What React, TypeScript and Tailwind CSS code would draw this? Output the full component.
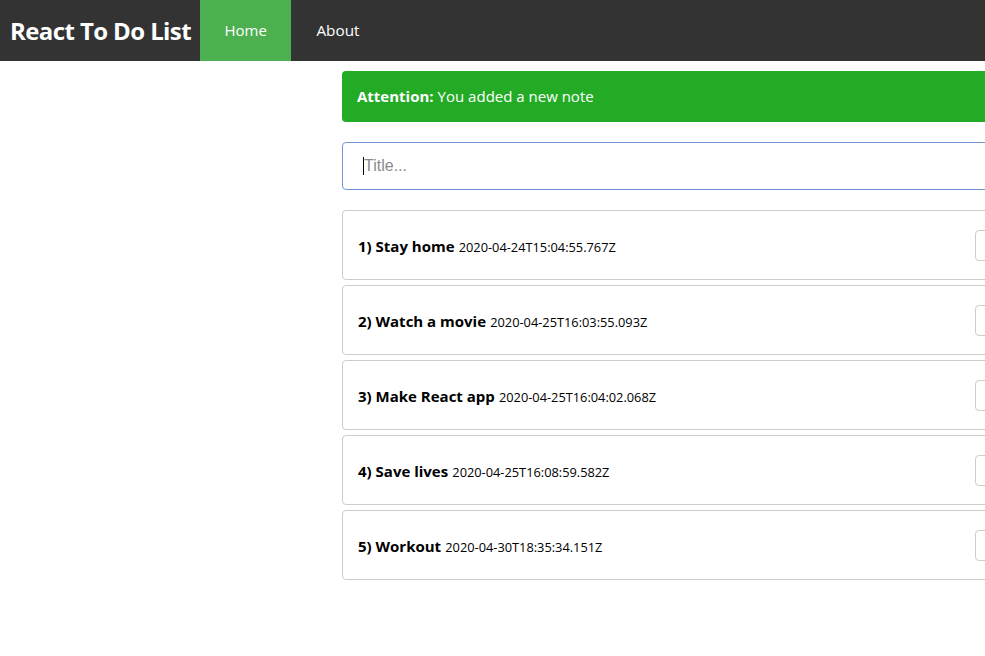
import React from 'react';

const notes = [
  { title: 'Stay home', date: '2020-04-24T15:04:55.767Z' },
  { title: 'Watch a movie', date: '2020-04-25T16:03:55.093Z' },
  { title: 'Make React app', date: '2020-04-25T16:04:02.068Z' },
  { title: 'Save lives', date: '2020-04-25T16:08:59.582Z' },
  { title: 'Workout', date: '2020-04-30T18:35:34.151Z' },
];

export default function App() {
  return (
    <div className="min-h-screen w-full overflow-hidden bg-white font-['Open_Sans',sans-serif] text-black">
      {/* Navbar */}
      <nav className="flex h-[61px] items-stretch bg-[#333333]">
        <div className="flex items-center pl-[10px] pr-[9px] text-[24px] font-bold tracking-[-0.6px] text-white">
          React To Do List
        </div>
        <a className="flex items-center bg-[#4caf50] px-[24.5px] text-[15px] text-white">Home</a>
        <a className="flex items-center px-[25px] text-[15.3px] text-white">About</a>
      </nav>

      <div className="ml-[342px] w-[700px] pt-[10px]">
        <div className="flex h-[51px] items-center rounded bg-[#23ab26] px-[15px] text-[15px] text-white">
          <strong className="mr-1">Attention:</strong> You added a new note
        </div>

        <div className="mt-5 flex h-[48px] items-center rounded border border-[#7297d9] px-5">
          <span className="h-[18px] w-px bg-black" />
          <span className="font-['Liberation_Sans',sans-serif] text-[16px] text-[#8a8a8a]">Title...</span>
        </div>

        <div className="mt-5 flex flex-col gap-[5px]">
          {notes.map((n, i) => (
            <div
              key={i}
              className="flex h-[70px] items-center justify-between rounded border border-[#cccccc] pl-[15px] pr-[9px]"
            >
              <div className="pt-[1px]">
                <span className="text-[15px] font-bold">
                  {i + 1}) {n.title}
                </span>{' '}
                <span className="text-[12.8px]">{n.date}</span>
              </div>
              <div className="h-[31px] w-[57px] rounded-sm border border-[#cccccc] bg-white" />
            </div>
          ))}
        </div>
      </div>
    </div>
  );
}
